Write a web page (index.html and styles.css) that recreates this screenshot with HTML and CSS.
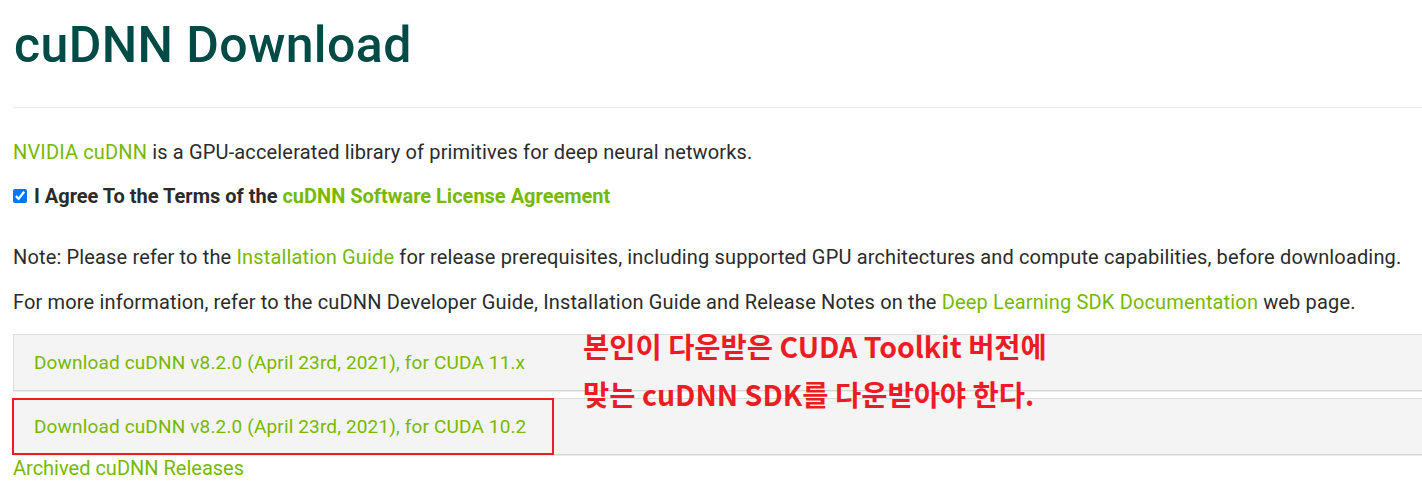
FILE: index.html
```html
<!DOCTYPE html>
<html lang="en">
<head>
<meta charset="utf-8">
<title>cuDNN Download</title>
<link rel="stylesheet" href="styles.css">
</head>
<body>
<main class="page">
  <h1 class="title">cuDNN Download</h1>
  <hr class="rule">
  <p class="intro"><a class="link" href="#">NVIDIA cuDNN</a> is a GPU-accelerated library of primitives for deep neural networks.</p>
  <label class="agree"><input type="checkbox" checked class="check"> <span>I Agree To the Terms of the <a class="link" href="#">cuDNN Software License Agreement</a></span></label>
  <p class="note">Note: Please refer to the <a class="link" href="#">Installation Guide</a> for release prerequisites, including supported GPU architectures and compute capabilities, before downloading.</p>
  <p class="more">For more information, refer to the cuDNN Developer Guide, Installation Guide and Release Notes on the <a class="link" href="#">Deep Learning SDK Documentation</a> web page.</p>
  <div class="downloads">
    <div class="dl"><a class="link" href="#">Download cuDNN v8.2.0 (April 23rd, 2021), for CUDA 11.x</a></div>
    <div class="dl"><a class="link" href="#">Download cuDNN v8.2.0 (April 23rd, 2021), for CUDA 10.2</a><span class="mark"></span></div>
    <div class="note-red">본인이 다운받은 CUDA Toolkit 버전에<br>맞는 cuDNN SDK를 다운받아야 한다.</div>
  </div>
  <a class="link archived" href="#">Archived cuDNN Releases</a>
</main>
</body>
</html>
```

FILE: styles.css
```css
html, body {
  margin: 0;
  padding: 0;
  overflow: hidden;
  background: #fff;
}
.page {
  width: 1450px;
  padding-left: 13px;
  font-family: Roboto, "Liberation Sans", sans-serif;
  color: #2b2b2b;
  font-size: 20px;
  letter-spacing: 0.15px;
}
.link {
  color: #76b900;
  text-decoration: none;
}
.title {
  margin: 0;
  height: 90px;
  line-height: 90px;
  font-size: 50px;
  font-weight: 500;
  color: #004b45;
  letter-spacing: 0.4px;
  padding-left: 1px;
}
.rule {
  margin: 17px 0 0 0;
  border: 0;
  border-top: 1px solid #e8e8e8;
  height: 0;
}
.intro {
  margin: 30px 0 0 0;
  line-height: 28px;
}
.agree {
  display: flex;
  align-items: center;
  margin-top: 16px;
  line-height: 28px;
  font-weight: 700;
  letter-spacing: 0;
  gap: 7px;
}
.check {
  margin: 0;
  width: 14px;
  height: 14px;
}
.note {
  margin: 33px 0 0 0;
  line-height: 28px;
}
.more {
  margin: 17px 0 0 0;
  line-height: 28px;
}
.downloads {
  position: relative;
  margin-top: 18px;
  display: flex;
  flex-direction: column;
  gap: 7px;
}
.dl {
  position: relative;
  height: 55px;
  line-height: 55px;
  padding-left: 20px;
  font-size: 19px;
  background: #f4f4f4;
  border: 1px solid #dcdcdc;
  border-bottom: 1px solid #d4d4d4;
  box-shadow: 0 1px 0 #ececec;
  border-right: 0;
}
.mark {
  position: absolute;
  left: -2px;
  top: -1px;
  width: 538px;
  height: 53px;
  border: 2px solid #ed1c24;
}
.note-red {
  position: absolute;
  left: 570px;
  top: -12px;
  font-family: "Noto Sans CJK KR", sans-serif;
  font-weight: 700;
  font-size: 28.5px;
  line-height: 48px;
  letter-spacing: 0;
  color: #ed1c24;
}
.archived {
  display: block;
  line-height: 26px;
  margin-top: 0;
  letter-spacing: 0;
}
```
